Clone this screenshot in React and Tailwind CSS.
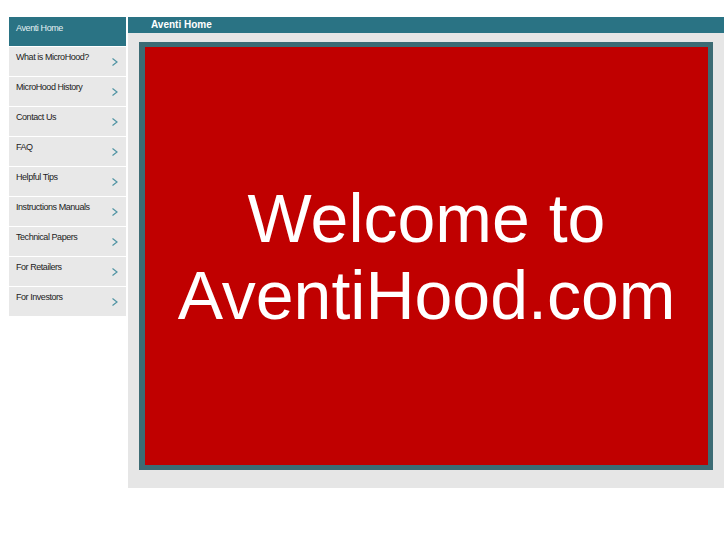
import React from "react";

const items = [
  "What is MicroHood?",
  "MicroHood History",
  "Contact Us",
  "FAQ",
  "Helpful Tips",
  "Instructions Manuals",
  "Technical Papers",
  "For Retailers",
  "For Investors",
];

function Chevron() {
  return (
    <svg width="8" height="10" viewBox="0 0 8 10" className="absolute right-[7px] bottom-[9px]">
      <path d="M1.5 1.5 L6 5 L1.5 8.5" fill="none" stroke="#4f93a3" strokeWidth="1.2" />
    </svg>
  );
}

export default function App() {
  return (
    <div
      className="w-[727px] h-[545px] bg-white flex items-start gap-[2px] pt-[17px] pl-[9px]"
      style={{ fontFamily: '"Liberation Sans", Arial, sans-serif' }}
    >
      <div className="w-[117px] flex flex-col">
        <div className="h-[29px] mb-[1px] bg-[#2a7384] text-[#e4f0f2] text-[9px] tracking-[-0.4px] pl-[7px] pt-[5px] leading-[13px]">
          Aventi Home
        </div>
        {items.map((t) => (
          <div
            key={t}
            className="relative h-[29px] mb-[1px] bg-[#e8e8e8] text-[#222] text-[9px] tracking-[-0.45px] pl-[7px] pt-[4px] leading-[13px]"
          >
            {t}
            <Chevron />
          </div>
        ))}
      </div>
      <div className="w-[596px] flex flex-col">
        <div className="h-[16px] bg-[#2a7384] text-white font-bold text-[10px] leading-[16px] pl-[23px]">
          Aventi Home
        </div>
        <div className="bg-[#e6e6e6] pt-[9px] pl-[11px] pr-[11px] pb-[18px]">
          <div className="h-[428px] border-[#3c6b74] border-l-[6px] border-t-[5px] border-r-[5px] border-b-[5px] bg-[#c00000] flex items-center justify-center">
            <div className="text-white text-center text-[68px] leading-[77px] pt-[2px]">
              Welcome to
              <br />
              AventiHood.com
            </div>
          </div>
        </div>
      </div>
    </div>
  );
}
